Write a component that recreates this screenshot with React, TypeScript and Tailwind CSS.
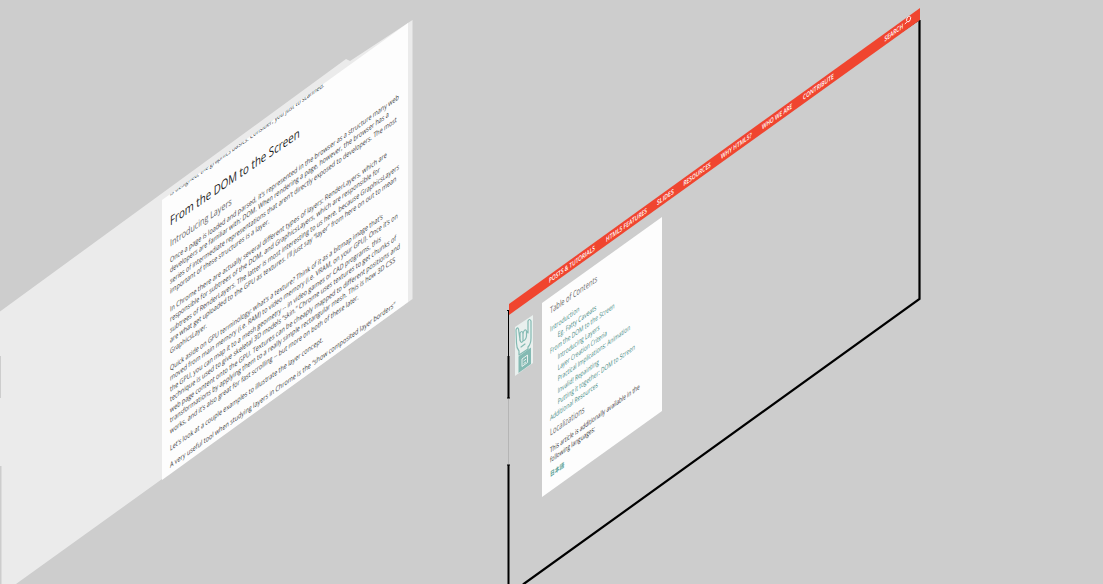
import { useLayoutEffect, useRef, useState, type ReactNode } from "react";

const SLOPE = 0.716;

type LineProps = {
  width: number;
  className?: string;
  indent?: number;
  slope?: number;
  children: ReactNode;
};

/* One line of text lying on the tilted plane, fitted to a width. */
function Line({ width, className = "", indent = 0, slope = SLOPE, children }: LineProps) {
  const ref = useRef<HTMLSpanElement>(null);
  const [scale, setScale] = useState(0.67);
  useLayoutEffect(() => {
    if (ref.current) setScale(width / ref.current.offsetWidth);
  }, [width]);
  return (
    <div className={`whitespace-nowrap ${className}`}>
      <span
        ref={ref}
        className="inline-block origin-top-left"
        style={{ transform: `matrix(${scale}, ${-slope * scale}, 0, 1, ${indent}, ${-indent * slope})` }}
      >
        {children}
      </span>
    </div>
  );
}

const paragraphs: [string, number][][] = [
  [
    ["Once a page is loaded and parsed, it’s represented in the browser as a structure many web", 229],
    ["developers are familiar with: DOM. When rendering a page, however, the browser has a", 219],
    ["series of intermediate representations that aren’t directly exposed to developers. The most", 227],
    ["important of these structures is a layer.", 99],
  ],
  [
    ["In Chrome there are actually several different types of layers: RenderLayers, which are", 217],
    ["responsible for subtrees of the DOM, and GraphicsLayers, which are responsible for", 210],
    ["subtrees of RenderLayers. The latter is most interesting to us here, because GraphicsLayers", 229],
    ["are what get uploaded to the GPU as textures. I’ll just say “layer” from here on out to mean", 226],
    ["GraphicsLayer.", 37],
  ],
  [
    ["Quick aside on GPU terminology: what’s a texture? Think of it as a bitmap image that’s", 213],
    ["moved from main memory (i.e. RAM) to video memory (i.e. VRAM, on your GPU). Once it’s on", 228],
    ["the GPU, you can map it to a mesh geometry -- in video games or CAD programs, this", 211],
    ["technique is used to give skeletal 3D models “skin.” Chrome uses textures to get chunks of", 226],
    ["web page content onto the GPU. Textures can be cheaply mapped to different positions and", 230],
    ["transformations by applying them to a really simple rectangular mesh. This is how 3D CSS", 225],
    ["works, and it’s also great for fast scrolling -- but more on both of these later.", 189],
  ],
  [["Let’s look at a couple examples to illustrate the layer concept.", 153]],
  [["A very useful tool when studying layers in Chrome is the “show composited layer borders”", 225]],
];

const contents: [string, number, number][] = [
  ["Introduction", 0, 29],
  ["Eg. Fatty Caveats", 7.7, 39],
  ["From the DOM to the Screen", 0, 64.5],
  ["Introducing Layers", 7.7, 42],
  ["Layer Creation Criteria", 7.7, 49.5],
  ["Practical Implications: Animation", 7.7, 72.5],
  ["Invalid! Repainting", 7.7, 41],
  ["Putting it together: DOM to Screen", 7.7, 77],
  ["Additional Resources", 0, 47.5],
];

const nav: [string, number, number][] = [
  ["POSTS & TUTORIALS", 40, 46],
  ["HTML5 FEATURES", 97, 41],
  ["SLIDES", 148, 17],
  ["RESOURCES", 174.5, 27.5],
  ["WHY HTML5?", 212, 31],
  ["WHO WE ARE", 253, 30.5],
  ["CONTRIBUTE", 294, 31],
  ["SEARCH", 375.5, 19],
];

function ArticleLayer() {
  return (
    <section className="absolute inset-0">
      <div className="absolute inset-0 bg-[#ebebeb] [clip-path:polygon(0_311.5px,346px_59px,350px_61px,412.5px_20px,412.5px_299px,16px_584px,1.5px_584px,1.5px_466px,0_466px,0_398px,1px_398px,1px_356px,0_356px)]" />
      <article className="absolute inset-0 bg-[#fdfdfd] pl-[170px] pt-[187px] text-[#3c3c3c] [clip-path:polygon(162px_200px,408px_23px,408px_302px,162px_480px)]">
        <Line width={154} slope={0.71} className="h-[21.6px] text-[7.4px] leading-[12px]">
          is designed, the graphics basics. Consider, you just to scanned.
        </Line>
        <Line width={130} slope={0.688} className="h-[23.2px] text-[13px] leading-[24px] text-[#222]">
          From the DOM to the Screen
        </Line>
        <Line width={62} slope={0.69} className="h-[23.2px] text-[10px] leading-[23px] text-[#666]">
          Introducing Layers
        </Line>
        <div className="flex flex-col gap-[6.7px] text-[7.5px] leading-[10.5px]">
          {paragraphs.map((lines, i) => (
            <div key={i}>
              {lines.map(([text, width]) => (
                <Line key={text} width={width} className="h-[10.5px]">
                  {text}
                </Line>
              ))}
            </div>
          ))}
        </div>
      </article>
    </section>
  );
}

function HandBadge() {
  return (
    <svg className="absolute left-[515px] top-[314px] h-[62px] w-[18px]" viewBox="0 0 18 62" fill="none">
      <path d="M0 13 18 1V49L0 62Z" fill="#e9f0ee" />
      <g stroke="#84bab3" strokeWidth="1.2" strokeLinejoin="round" strokeLinecap="round">
        <path d="M4 37Q1.5 34 1.5 29L1 16Q2 12.5 3.5 15L5 26V19Q7 16 8 19Q10 14 11.5 17L13 19V7Q14.5 4 16 7V24Q16 30 13 33V35L4 41Z" />
        <path d="M5 26Q6 30 8 27V19M8 27Q11 26 11.5 22V17M6 33 10 30" />
      </g>
      <path d="M3.5 42.5 16 33.5V50L3.5 59Z" fill="#84bab3" />
      <path d="M7 45 12.5 41V48.5L7 52.5ZM8.5 47 11 45.2M8.5 49.7 11 47.9" stroke="#e9f0ee" />
    </svg>
  );
}

function ContentsLayer() {
  return (
    <aside className="absolute inset-0 bg-[#fdfdfd] pl-[550px] pt-[303px] text-[#444] [clip-path:polygon(542px_303px,662px_217px,662px_411px,542px_497px)]">
      <Line width={47} slope={0.69} className="h-[21px] text-[9.2px] leading-[16px] text-[#666]">
        Table of Contents
      </Line>
      <ul className="text-[7.5px] leading-[11.1px] text-[#41877e]">
        {contents.map(([text, indent, width]) => (
          <li key={text}>
            <Line width={width} indent={indent} className="h-[11.1px]">
              {text}
            </Line>
          </li>
        ))}
      </ul>
      <Line width={34.5} slope={0.69} className="h-[21px] text-[9.5px] leading-[17px] text-[#666]">
        Localizations
      </Line>
      <div className="text-[7.5px] leading-[10.5px] text-[#333]">
        <Line width={89.5} className="h-[10.2px]">This article is additionally available in the</Line>
        <Line width={45} className="h-[15px]">following languages:</Line>
      </div>
      <Line width={14.5} className="text-[6.5px] font-bold leading-[9px] text-[#5fa399]">
        日本語
      </Line>
    </aside>
  );
}

function NavigationLayer() {
  return (
    <nav className="absolute inset-0 bg-[#f0452f] pl-[509px] pt-[305px] text-white [clip-path:polygon(509px_304px,920px_8px,920px_20px,509px_315px)]">
      <div className="grid text-[7px] font-semibold leading-[10px]">
        {nav.map(([text, indent, width]) => (
          <Line key={text} width={width} indent={indent} slope={0.72} className="col-start-1 row-start-1 h-[10px]">
            {text}
          </Line>
        ))}
      </div>
      <svg className="absolute left-[903px] top-[14px] h-[12px] w-[10px]" viewBox="0 0 10 12" fill="none" stroke="white" strokeWidth=".9">
        <ellipse cx="5.6" cy="5" rx="1.8" ry="3" transform="rotate(20 5.6 5)" />
        <path d="M4.2 7.6 1.8 10.2" />
      </svg>
    </nav>
  );
}

export default function App() {
  return (
    <main className="relative h-[584px] w-[1103px] overflow-hidden bg-[#cdcdcd] font-['Open_Sans','Noto_Sans_CJK_JP',sans-serif]">
      <ArticleLayer />
      <svg className="absolute inset-0 h-full w-full" viewBox="0 0 1103 584" fill="none" stroke="black">
        <path d="M919.5 20V299L523 584.5" strokeWidth="2.2" />
        <path d="M508.5 356V398M508.5 465V584" strokeWidth="2" />
        <path d="M508.5 356V310M903 31 920 19.5" />
        <path d="M508.5 398V465" stroke="#aaa" strokeWidth=".7" />
        <path d="M507 310.5H510M507 398H510M507 465H510" />
      </svg>
      <ContentsLayer />
      <HandBadge />
      <NavigationLayer />
    </main>
  );
}
